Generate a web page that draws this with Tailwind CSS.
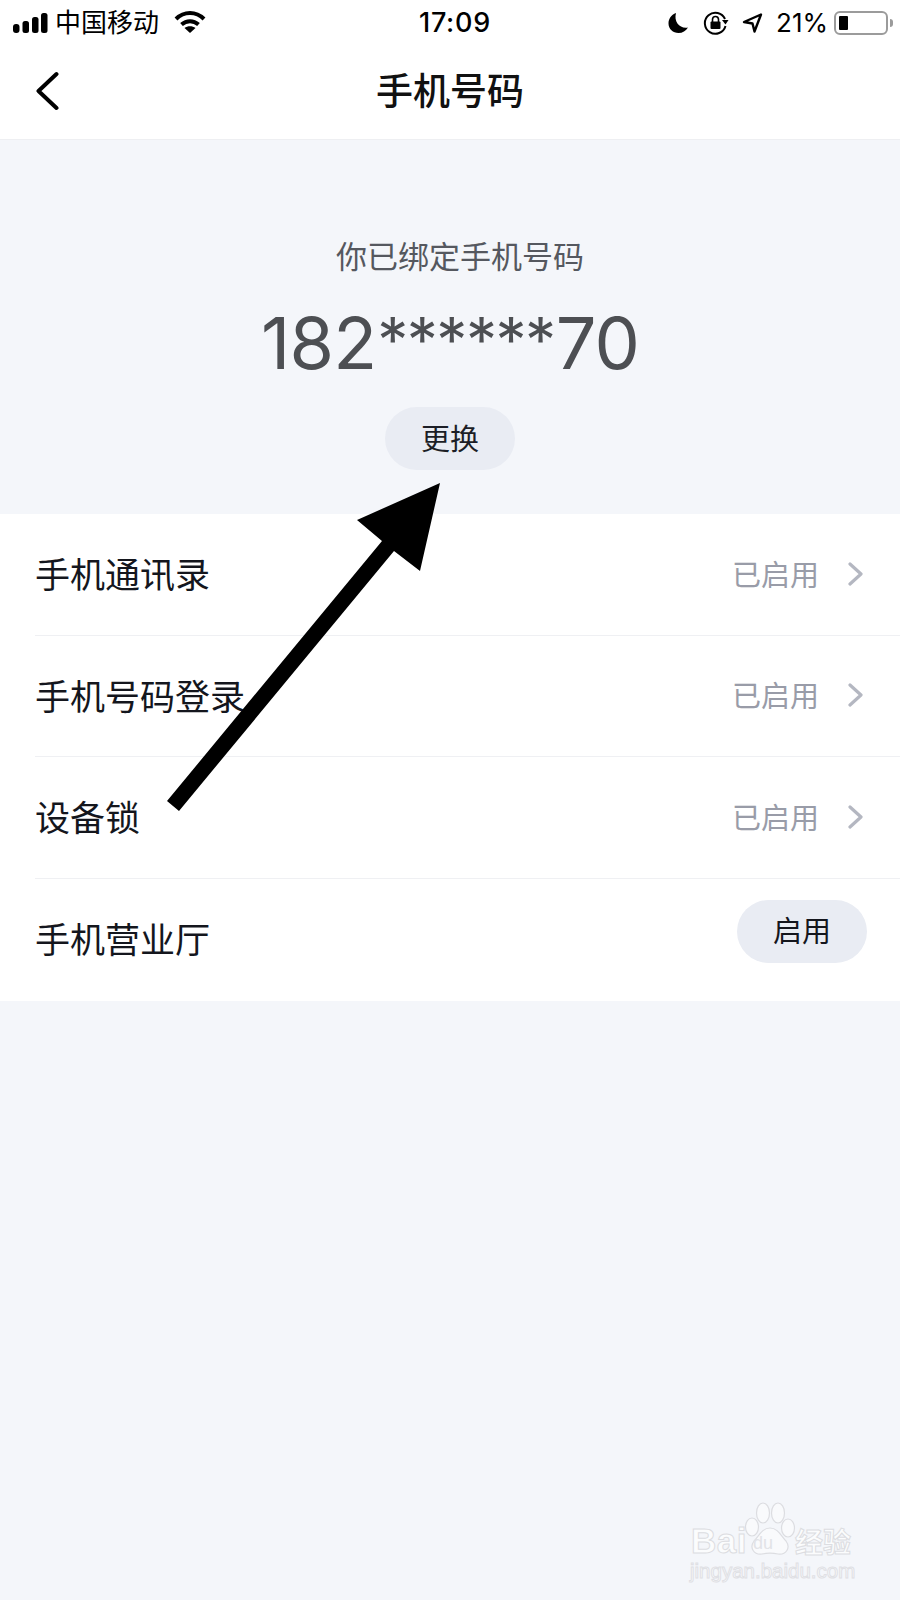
<!DOCTYPE html>
<html lang="zh-CN">

<head>
	<meta charset="UTF-8">
	<meta name="viewport" content="width=device-width, initial-scale=1.0">
	<title>手机号码</title>
	<script src="https://cdn.jsdelivr.net/npm/@tailwindcss/browser@4"></script>
</head>

<body class="relative w-[900px] h-[1600px] overflow-hidden bg-[#f4f6fa] font-['Inter','Noto_Sans_CJK_SC',sans-serif]">
	<div class="bg-white">
		<!-- status bar -->
		<div class="relative h-[46px] flex items-center justify-between pl-[13px] pr-[7px] text-black">
			<div class="flex items-center">
				<svg width="35" height="22" viewBox="0 0 35 22" fill="#000">
					<rect x="0" y="12" width="6.5" height="9" rx="3" />
					<rect x="9.5" y="9" width="6.5" height="12" rx="2.5" />
					<rect x="19" y="5" width="6.5" height="16" rx="2.5" />
					<rect x="28" y="1" width="6.5" height="20" rx="2.5" />
				</svg>
				<span class="ml-[7px] mb-[4px] text-[26px] leading-none font-['Noto_Sans_CJK_SC',sans-serif]">中国移动</span>
				<svg class="ml-[15px] mb-[2px]" width="32" height="24" viewBox="0 0 32 24" fill="none" stroke="#000" stroke-width="4">
					<path d="M2 9 C10 1 22 1 30 9" />
					<path d="M7.5 14.5 C12.5 10 19.5 10 24.5 14.5" />
					<path d="M16 23 L10.5 18 C13.5 15.5 18.5 15.5 21.5 18 Z" fill="#000" stroke="none" />
				</svg>
			</div>
			<span class="absolute left-[419px] top-[8px] text-[27px] leading-[30px] font-medium tracking-[0.7px]">17:09</span>
			<div class="flex items-center">
				<svg width="21" height="22" viewBox="0 0 21 22" fill="#000">
					<path d="M8 1 C3 3 0.5 7 0.5 11.5 C0.5 17 5 21 10.5 21 C14.5 21 18 19 20 15.5 C12 17 5.5 10 8 1 Z" />
				</svg>
				<svg class="ml-[14px]" width="26" height="24" viewBox="0 0 26 24" fill="none" stroke="#000" stroke-width="2">
					<path d="M22 8 A10.5 10.5 0 1 0 22.5 15" />
					<path d="M19 9 L25.5 9 L22.5 13.5 Z" fill="#000" stroke="none" />
					<rect x="7.5" y="10.5" width="10" height="7.5" rx="1" fill="#000" stroke="none" />
					<path d="M9.5 11 V8.5 A3 3 0 0 1 15.5 8.5 V11" stroke-width="1.6" />
				</svg>
				<svg class="ml-[13px]" width="21" height="20" viewBox="0 0 21 20" fill="none" stroke="#000" stroke-width="2.4" stroke-linejoin="round">
					<path d="M19 1.5 L2 9 L10.5 10.5 L12.5 18.5 Z" />
				</svg>
				<span class="ml-[13px] text-[26px] leading-none">21%</span>
				<div class="ml-[6px] w-[54px] h-[24px] rounded-[6px] border-[2px] border-[#9b9b9b] p-[3px] flex">
					<div class="w-[9px] bg-black rounded-[1px]"></div>
				</div>
				<div class="ml-[2px] w-[3px] h-[8px] rounded-r-full bg-[#9b9b9b]"></div>
			</div>
		</div>

		<!-- nav bar -->
		<div class="relative h-[94px] flex items-center justify-center border-b border-[#eeeff2]">
			<svg class="absolute left-[35px] top-[25px]" width="24" height="40" viewBox="0 0 24 40" fill="none" stroke="#000" stroke-width="4" stroke-linecap="round" stroke-linejoin="round">
				<path d="M21.5 3 L3.5 20 L21.5 37" />
			</svg>
			<span class="mb-[6px] text-[37px] leading-none font-medium text-[#111] font-['Noto_Sans_CJK_SC',sans-serif]">手机号码</span>
		</div>
	</div>

	<!-- bound number -->
	<div class="h-[374px] flex flex-col items-center pt-[96px]">
		<div class="ml-[20px] text-[31px] leading-[38px] text-[#55585f] font-['Noto_Sans_CJK_SC',sans-serif]">你已绑定手机号码</div>
		<div class="mt-[25px] text-[72px] leading-[88px] tracking-[-0.8px] text-[#4d4f53] font-['Inter',sans-serif]">182<span class="relative bottom-[7px] mx-[1px] text-[62px] tracking-[-1.5px]">******</span>70</div>
		<button class="mt-[16px] w-[130px] h-[63px] rounded-full bg-[#e9ecf3] text-[29px] leading-none text-[#1c1e26] font-['Noto_Sans_CJK_SC',sans-serif]"><span class="relative bottom-[1px]">更换</span></button>
	</div>

	<!-- settings list -->
	<div class="bg-white pl-[35px] h-[487px] text-[35px] text-[#14161d] font-['Noto_Sans_CJK_SC',sans-serif]">
		<div class="h-[122px] flex items-center justify-between pr-[37px] border-b border-[#eff0f3]">
			<span class="mb-[4px] leading-none">手机通讯录</span>
			<div class="mb-[2px] flex items-center text-[29px] text-[#999ca8]">
				<span>已启用</span>
				<svg class="ml-[29px]" width="15" height="24" viewBox="0 0 15 24" fill="none" stroke="#b4b7c1" stroke-width="3.2" stroke-linecap="round" stroke-linejoin="round">
					<path d="M2 2 L13 12 L2 22" />
				</svg>
			</div>
		</div>
		<div class="h-[121px] flex items-center justify-between pr-[37px] border-b border-[#eff0f3]">
			<span class="mb-[4px] leading-none">手机号码登录</span>
			<div class="mb-[2px] flex items-center text-[29px] text-[#999ca8]">
				<span>已启用</span>
				<svg class="ml-[29px]" width="15" height="24" viewBox="0 0 15 24" fill="none" stroke="#b4b7c1" stroke-width="3.2" stroke-linecap="round" stroke-linejoin="round">
					<path d="M2 2 L13 12 L2 22" />
				</svg>
			</div>
		</div>
		<div class="h-[122px] flex items-center justify-between pr-[37px] border-b border-[#eff0f3]">
			<span class="mb-[4px] leading-none">设备锁</span>
			<div class="mb-[2px] flex items-center text-[29px] text-[#999ca8]">
				<span>已启用</span>
				<svg class="ml-[29px]" width="15" height="24" viewBox="0 0 15 24" fill="none" stroke="#b4b7c1" stroke-width="3.2" stroke-linecap="round" stroke-linejoin="round">
					<path d="M2 2 L13 12 L2 22" />
				</svg>
			</div>
		</div>
		<div class="h-[122px] flex justify-between pr-[33px]">
			<span class="mt-[41px] leading-none">手机营业厅</span>
			<button class="mt-[21px] w-[130px] h-[63px] rounded-full bg-[#e9ecf3] text-[29px] leading-none text-[#14161d]"><span class="relative bottom-[2px]">启用</span></button>
		</div>
	</div>

	<!-- annotation arrow drawn over the page -->
	<svg class="absolute left-0 top-0 pointer-events-none" width="900" height="1600" viewBox="0 0 900 1600" fill="#000">
		<polygon points="440,483 420,571 394,551 179,811 167,801 382,541 357,520" />
	</svg>

	<!-- watermark -->
	<div class="absolute left-[690px] top-[1500px] w-[165px] h-[84px] pointer-events-none">
		<span class="absolute left-[1px] top-[21px] text-[35px] leading-[40px] font-bold tracking-[0.5px] text-white/70 [-webkit-text-stroke:1px_#dcdde1] font-['Liberation_Sans',sans-serif]">Bai</span>
		<svg class="absolute left-[54px] top-[2px]" width="52" height="56" viewBox="0 0 52 56" fill="#f9fafc" stroke="#dcdde1" stroke-width="1.2">
			<ellipse cx="8" cy="25" rx="6.5" ry="9" />
			<ellipse cx="19" cy="11" rx="6.5" ry="10" />
			<ellipse cx="34" cy="11" rx="6.5" ry="10" />
			<ellipse cx="44" cy="26" rx="6.5" ry="9" />
			<path d="M26 26 C34 26 37 34 42 39 C47 46 42 53 34 52 C29 51 23 51 18 52 C10 53 5 46 10 39 C15 34 18 26 26 26 Z" />
		</svg>
		<span class="absolute left-[63px] top-[33px] text-[18px] leading-[20px] text-[#e2e3e7] font-['Liberation_Sans',sans-serif]">du</span>
		<span class="absolute left-[105px] top-[24px] text-[28px] leading-[34px] font-bold text-white/70 [-webkit-text-stroke:1px_#dcdde1] font-['Noto_Sans_CJK_SC',sans-serif]">经验</span>
		<span class="absolute left-0 top-[59px] text-[20.5px] leading-[24px] text-white/70 [-webkit-text-stroke:1px_#dfe0e4] font-['Liberation_Sans',sans-serif]">jingyan.baidu.com</span>
	</div>
</body>

</html>
